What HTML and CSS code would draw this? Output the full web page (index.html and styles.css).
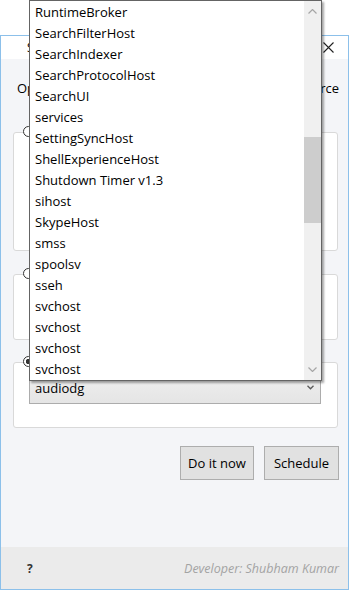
FILE: index.html
```html
<!DOCTYPE html>
<html>
<head>
    <title>Shutdown Timer</title>
    <link rel="stylesheet" href="styles.css">
</head>
<body>
    <div class="page">
        <div class="window">
            <div class="titlebar">
                <span class="title">Shutdown Timer v1.3</span>
                <svg class="close" width="11" height="11" viewBox="0 0 11 11"><path d="M0.5 0.5 L10.5 10.5 M10.5 0.5 L0.5 10.5" stroke="#222" stroke-width="1.1" fill="none"/></svg>
            </div>

            <div class="content">
                <div class="opts">
                    <span>Options</span>
                    <span>Force</span>
                </div>

                <div class="group g1">
                    <span class="radio"></span>
                </div>

                <div class="group g2">
                    <span class="radio"></span>
                </div>

                <div class="group g3">
                    <span class="radio checked"></span>
                    <div class="combo">
                        <span>audiodg</span>
                        <svg width="7" height="5" viewBox="0 0 7 5"><path d="M0.5 0.8 L3.5 3.8 L6.5 0.8" stroke="#5a5a5a" stroke-width="1.3" fill="none"/></svg>
                    </div>
                </div>

                <div class="actions">
                    <button class="btn">Do it now</button>
                    <button class="btn">Schedule</button>
                </div>
            </div>

            <div class="footer">
                <span class="help">?</span>
                <span class="dev">Developer: Shubham Kumar</span>
            </div>
        </div>

        <!-- open dropdown of the process combo -->
        <div class="droplist">
            <ul class="items">
                <li>RuntimeBroker</li>
                <li>SearchFilterHost</li>
                <li>SearchIndexer</li>
                <li>SearchProtocolHost</li>
                <li>SearchUI</li>
                <li>services</li>
                <li>SettingSyncHost</li>
                <li>ShellExperienceHost</li>
                <li>Shutdown Timer v1.3</li>
                <li>sihost</li>
                <li>SkypeHost</li>
                <li>smss</li>
                <li>spoolsv</li>
                <li>sseh</li>
                <li>svchost</li>
                <li>svchost</li>
                <li>svchost</li>
                <li>svchost</li>
            </ul>
            <div class="scrollbar">
                <svg class="arrow" width="9" height="5" viewBox="0 0 9 5"><path d="M0.5 4.5 L4.5 0.5 L8.5 4.5" stroke="#a6a6a6" stroke-width="1.2" fill="none"/></svg>
                <div class="track"><div class="thumb"></div></div>
                <svg class="arrow" width="9" height="5" viewBox="0 0 9 5"><path d="M0.5 0.5 L4.5 4.5 L8.5 0.5" stroke="#a6a6a6" stroke-width="1.2" fill="none"/></svg>
            </div>
        </div>
    </div>
</body>
</html>
```

FILE: styles.css
```css
body { margin: 0; background: #fff; font-family: "Open Sans", "Noto Sans", sans-serif; font-size: 12px; color: #000; }
.page { position: relative; padding-top: 35px; }

.window {
    width: 347px;
    height: 553px;
    border: 1px solid #8cc0ea;
    display: flex;
    flex-direction: column;
}
.titlebar {
    height: 23px;
    background: #fff;
    display: flex;
    align-items: center;
    justify-content: space-between;
    padding: 0 14px 0 26px;
}
.title { font-size: 12px; }
.close { margin-top: -1px; }

.content {
    flex: 1;
    background: #f4f5f8;
    padding: 20px 9px 0 12px;
    display: flex;
    flex-direction: column;
}
.opts {
    height: 18px;
    line-height: 18px;
    display: flex;
    justify-content: space-between;
    padding-left: 4px;
    font-size: 13px;
}
.group {
    background: #fff;
    border: 1px solid #d9d9d9;
    border-radius: 3px;
    width: 323px;
}
.g1 { margin-top: 35px; height: 117px; }
.g2 { margin-top: 23px; height: 64px; }
.g3 { margin-top: 22px; height: 64px; }
.radio {
    display: block;
    width: 9px;
    height: 9px;
    border: 1px solid #333;
    border-radius: 50%;
    background: #fff;
    margin: -7px 0 0 9px;
}
.radio.checked { background: radial-gradient(circle, #333 0 2.5px, #fff 3px); }

.combo {
    margin: 4px 0 0 15px;
    width: 292px;
    height: 33px;
    border: 1px solid #acacac;
    background: linear-gradient(#efefef, #e5e5e5);
    display: flex;
    align-items: center;
    justify-content: space-between;
    padding: 0 6px 0 5px;
    box-sizing: border-box;
    font-size: 13px;
}

.actions {
    margin-top: 18px;
    display: flex;
    justify-content: flex-end;
    gap: 10px;
}
.btn {
    height: 34px;
    background: #e1e1e1;
    border: 1px solid #adadad;
    font-family: inherit;
    font-size: 13px;
    color: #000;
    padding: 0;
}
.btn:first-child { width: 74px; }
.btn:last-child { width: 75px; }

.footer {
    height: 42px;
    background: #ebebeb;
    display: flex;
    align-items: center;
    justify-content: space-between;
    padding: 0 9px 0 26px;
}
.help { font-weight: bold; color: #333; font-size: 12px; }
.dev { font-style: italic; color: #a3a3a3; font-size: 12.5px; }

.droplist {
    position: absolute;
    left: 29px;
    top: 0;
    width: 291px;
    height: 379px;
    border: 1px solid #646464;
    background: #fff;
    box-shadow: 2px 2px 2px rgba(0,0,0,0.35);
    display: flex;
}
.items {
    list-style: none;
    margin: 0;
    padding: 1px 0 0 5px;
    flex: 1;
    overflow: hidden;
    font-size: 13px;
}
.items li { height: 21px; line-height: 21px; white-space: nowrap; }
.scrollbar {
    width: 17px;
    background: #f0f0f0;
    display: flex;
    flex-direction: column;
    align-items: center;
}
.arrow { margin: 8px 0; }
.track { flex: 1; width: 100%; padding-top: 115px; }
.thumb { height: 86px; background: #cdcdcd; }
```
